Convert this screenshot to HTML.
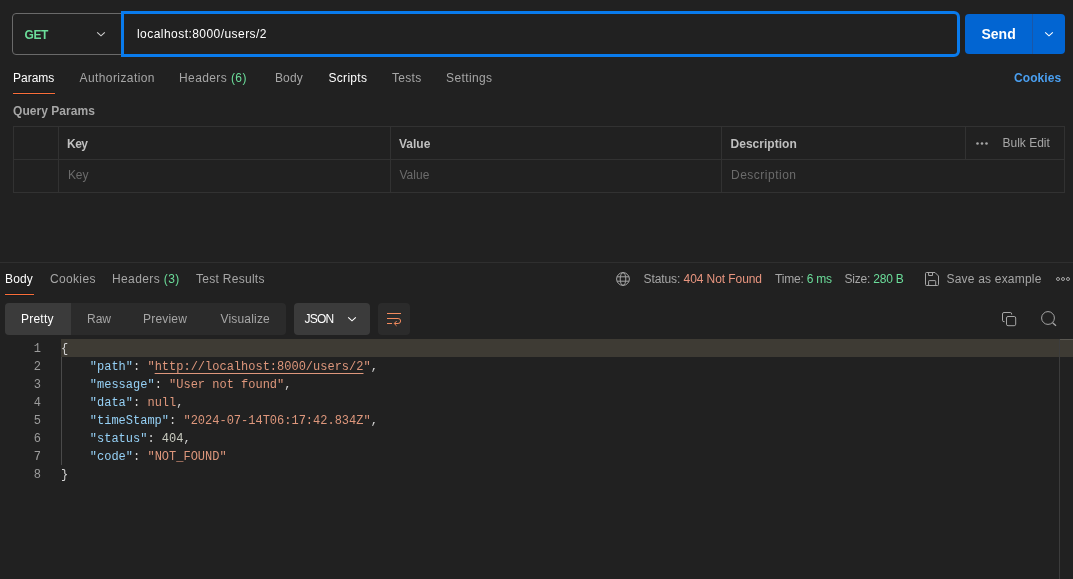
<!DOCTYPE html>
<html lang="en">
<head>
<meta charset="utf-8">
<title>Postman</title>
<style>
*{box-sizing:border-box;margin:0;padding:0}
html,body{width:1073px;height:579px;overflow:hidden;background:#212121}
body{position:relative;font-family:"Liberation Sans",Arial,sans-serif;font-size:12px;color:#a6a6a6;-webkit-font-smoothing:antialiased}
.a{position:absolute;white-space:nowrap;line-height:16px;height:16px}
.b{font-weight:bold}
.w{color:#fff}
.g{color:#6bdd9a}
.ph{color:#6b6b6b}
.hd{color:#bfbfbf;font-weight:bold}
.ln{position:absolute;background:#323232}
svg{position:absolute;overflow:visible}
.code{position:absolute;left:0;top:340px;font-family:"Liberation Mono","DejaVu Sans Mono",monospace;font-size:12px;line-height:18px;color:#d4d4d4}
.code .row{position:absolute;left:0;height:18px;white-space:pre}
.code .no{position:absolute;left:0;width:41px;text-align:right;color:#9c9c9c}
.code .tx{position:absolute;left:61px}
.k{color:#95d0f5}.s{color:#de977c}.n{color:#c9cbc0}.u{text-decoration:underline;text-underline-offset:2.5px}
</style>
</head>
<body>
<div id="root" style="position:absolute;left:0;top:0;width:1073px;height:579px;will-change:transform;transform:translateZ(0)">

<!-- URL bar -->
<div class="a" style="left:12px;top:13px;width:112px;height:42px;border:1px solid #6a6a6a;border-radius:4px 0 0 4px"></div>
<div class="a b g" id="get" style="left:24.5px;top:26.5px;letter-spacing:-0.4px">GET</div>
<svg id="chev1" style="left:96px;top:31px" width="10" height="6" viewBox="0 0 10 6"><path d="M1.2 1.3 L5 4.8 L8.8 1.3" fill="none" stroke="#cfcfcf" stroke-width="1.15"/></svg>
<div class="a" style="left:121px;top:11px;width:839px;height:46px;border:3px solid #097bed;border-radius:0 6px 6px 0;background:#212121"></div>
<div class="a w" id="url" style="left:137px;top:26px;letter-spacing:0.45px">localhost:8000/users/2</div>

<div class="a" style="left:965px;top:14px;width:100px;height:40px;background:#0265d2;border-radius:4px"></div>
<div class="ln" style="left:1032px;top:14px;width:1px;height:40px;background:#1a57a8"></div>
<div class="a b w" id="send" style="left:981.5px;top:26px;font-size:14px">Send</div>
<svg id="chev2" style="left:1044px;top:31px" width="10" height="6" viewBox="0 0 10 6"><path d="M1.2 1.3 L5 4.8 L8.8 1.3" fill="none" stroke="#fff" stroke-width="1.15"/></svg>

<!-- request tabs -->
<div class="a w" id="t1" style="left:13px;top:70px">Params</div>
<div class="ln" style="left:13px;top:92px;width:42px;height:3px;background:linear-gradient(#161d20 0 1px,#fb6d38 1px 2px,#161d20 2px 3px)"></div>
<div class="a" id="t2" style="left:79.5px;top:70px;letter-spacing:0.41px">Authorization</div>
<div class="a" id="t3" style="left:179px;top:70px;letter-spacing:0.4px">Headers <span class="g">(6)</span></div>
<div class="a" id="t4" style="left:275px;top:70px;letter-spacing:0.1px">Body</div>
<div class="a w" id="t5" style="left:328.5px;top:70px;letter-spacing:0.3px">Scripts</div>
<div class="a" id="t6" style="left:392px;top:70px;letter-spacing:0.28px">Tests</div>
<div class="a" id="t7" style="left:446px;top:70px;letter-spacing:0.39px">Settings</div>
<div class="a b" id="cook" style="left:1014px;top:69.5px;color:#4a9ff0;letter-spacing:0.07px">Cookies</div>

<div class="a b" id="qp" style="left:13px;top:103px;letter-spacing:0.05px">Query Params</div>

<!-- table -->
<div class="a" style="left:13px;top:126px;width:1052px;height:67px;border:1px solid #323232"></div>
<div class="ln" style="left:13px;top:159px;width:1052px;height:1px"></div>
<div class="ln" style="left:58px;top:126px;width:1px;height:67px"></div>
<div class="ln" style="left:390px;top:126px;width:1px;height:67px"></div>
<div class="ln" style="left:721px;top:126px;width:1px;height:67px"></div>
<div class="ln" style="left:965px;top:126px;width:1px;height:34px"></div>
<div class="a hd" id="h1" style="left:67px;top:136px;letter-spacing:-0.5px">Key</div>
<div class="a hd" id="h2" style="left:399px;top:136px">Value</div>
<div class="a hd" id="h3" style="left:730.5px;top:136px;letter-spacing:0.03px">Description</div>
<svg id="dots1" style="left:976px;top:141.5px" width="12" height="3" viewBox="0 0 12 3"><circle cx="1.5" cy="1.5" r="1.3" fill="#a6a6a6"/><circle cx="6" cy="1.5" r="1.3" fill="#a6a6a6"/><circle cx="10.5" cy="1.5" r="1.3" fill="#a6a6a6"/></svg>
<div class="a" id="bulk" style="left:1002.5px;top:135px">Bulk Edit</div>
<div class="a ph" id="p1" style="left:68px;top:167px;letter-spacing:-0.15px">Key</div>
<div class="a ph" id="p2" style="left:399.5px;top:167px">Value</div>
<div class="a ph" id="p3" style="left:731px;top:167px;letter-spacing:0.5px">Description</div>

<!-- response -->
<div class="ln" style="left:0;top:262px;width:1073px;height:1px;background:#2f2f2f"></div>
<div class="a w" id="r1" style="left:5px;top:271px;letter-spacing:0.15px">Body</div>
<div class="ln" style="left:5px;top:293px;width:29px;height:3px;background:linear-gradient(#161d20 0 1px,#fb6d38 1px 2px,#161d20 2px 3px)"></div>
<div class="a" id="r2" style="left:50px;top:271px;letter-spacing:0.34px">Cookies</div>
<div class="a" id="r3" style="left:112px;top:271px;letter-spacing:0.39px">Headers <span class="g">(3)</span></div>
<div class="a" id="r4" style="left:196px;top:271px;letter-spacing:0.28px">Test Results</div>

<svg id="globe" style="left:616px;top:272px" width="14" height="14" viewBox="0 0 14 14" fill="none" stroke="#a6a6a6" stroke-width="1"><circle cx="7" cy="7" r="6.4"/><ellipse cx="7" cy="7" rx="2.8" ry="6.4"/><path d="M1 4.8H13M1 9.2H13"/></svg>
<div class="a" id="s1" style="left:643.5px;top:271px;letter-spacing:-0.08px">Status: <span style="color:#e8957f">404 Not Found</span></div>
<div class="a" id="s2" style="left:775px;top:271px;letter-spacing:-0.2px">Time: <span class="g">6 ms</span></div>
<div class="a" id="s3" style="left:844.5px;top:271px;letter-spacing:-0.2px">Size: <span class="g">280 B</span></div>
<svg id="save" style="left:925px;top:272px" width="14" height="14" viewBox="0 0 14 14" fill="none" stroke="#a6a6a6" stroke-width="1" stroke-linejoin="round"><path d="M1.5 0.500H10L13.500 4V12.500a1 1 0 0 1-1 1H1.500a1 1 0 0 1-1-1V1.500a1 1 0 0 1 1-1Z"/><path d="M3.600 0.500V3.500H7.500V0.500"/><path d="M3.600 13.500V9.200a0.600 0.600 0 0 1 0.600-0.600H10.100a0.600 0.600 0 0 1 0.600 0.600V13.500"/></svg>
<div class="a" id="s4" style="left:946.5px;top:271px;letter-spacing:0.2px">Save as example</div>
<svg id="dots2" style="left:1056px;top:277px" width="14" height="4" viewBox="0 0 14 4" fill="none" stroke="#a6a6a6" stroke-width="1"><circle cx="2" cy="2" r="1.500"/><circle cx="7" cy="2" r="1.500"/><circle cx="12" cy="2" r="1.500"/></svg>

<!-- view mode row -->
<div class="a" style="left:5px;top:303px;width:281px;height:32px;background:#2b2b2b;border-radius:4px"></div>
<div class="a" style="left:5px;top:303px;width:66px;height:32px;background:#3b3b3b;border-radius:4px 0 0 4px"></div>
<div class="a w" id="m1" style="left:21px;top:311px;letter-spacing:0.23px">Pretty</div>
<div class="a" id="m2" style="left:87px;top:311px">Raw</div>
<div class="a" id="m3" style="left:143px;top:311px;letter-spacing:0.2px">Preview</div>
<div class="a" id="m4" style="left:220.5px;top:311px;letter-spacing:0.18px">Visualize</div>
<div class="a" style="left:294px;top:303px;width:76px;height:32px;background:#3b3b3b;border-radius:4px"></div>
<div class="a w" id="json" style="left:304.5px;top:311px;letter-spacing:-0.8px">JSON</div>
<svg id="chev3" style="left:347px;top:316px" width="10" height="6" viewBox="0 0 10 6"><path d="M1.2 1.3 L5 4.8 L8.8 1.3" fill="none" stroke="#fff" stroke-width="1.15"/></svg>
<div class="a" style="left:378px;top:303px;width:32px;height:32px;background:#2b2b2b;border-radius:4px"></div>
<svg id="wrap" style="left:386px;top:312px" width="16" height="15" viewBox="0 0 16 15" fill="none" stroke="#f48b5e" stroke-width="1"><path d="M1 1.500H15"/><path d="M1 6.500H12.100a2.500 2.500 0 0 1 0 5H8.600"/><path d="M10.600 9.100L8.200 11.500L10.600 13.900"/><path d="M1 11.500H6"/></svg>

<svg id="copy" style="left:1002px;top:312px" width="15" height="15" viewBox="0 0 15 15" fill="none" stroke="#a6a6a6" stroke-width="1"><rect x="4.500" y="4.500" width="9.200" height="9.200" rx="1.500"/><path d="M2.600 9.700H2a1.500 1.500 0 0 1-1.500-1.500V2A1.500 1.500 0 0 1 2 0.500H8.200A1.500 1.500 0 0 1 9.700 2V2.600"/></svg>
<svg id="search" style="left:1041px;top:311px" width="16" height="16" viewBox="0 0 16 16" fill="none" stroke="#a6a6a6" stroke-width="1"><circle cx="7" cy="7" r="6.400"/><path d="M11.600 11.700L15 14.800" stroke-width="1.300"/></svg>

<!-- editor -->
<div class="a" style="left:61px;top:339px;width:1012px;height:18px;background:#3e3b34"></div>
<div class="ln" style="left:61px;top:357px;width:1px;height:108px;background:#4a4a4a"></div>
<div class="ln" style="left:1059px;top:339px;width:1px;height:240px;background:#3c3c3c"></div>
<div class="ln" style="left:1060px;top:339px;width:13px;height:1px;background:#5a5852"></div>
<div class="code">
<div class="row" style="top:0"><span class="no">1</span><span class="tx">{</span></div>
<div class="row" style="top:18px"><span class="no">2</span><span class="tx">    <span class="k">"path"</span>: <span class="s">"<span class="u">http://localhost:8000/users/2</span>"</span>,</span></div>
<div class="row" style="top:36px"><span class="no">3</span><span class="tx">    <span class="k">"message"</span>: <span class="s">"User not found"</span>,</span></div>
<div class="row" style="top:54px"><span class="no">4</span><span class="tx">    <span class="k">"data"</span>: <span class="s">null</span>,</span></div>
<div class="row" style="top:72px"><span class="no">5</span><span class="tx">    <span class="k">"timeStamp"</span>: <span class="s">"2024-07-14T06:17:42.834Z"</span>,</span></div>
<div class="row" style="top:90px"><span class="no">6</span><span class="tx">    <span class="k">"status"</span>: <span class="n">404</span>,</span></div>
<div class="row" style="top:108px"><span class="no">7</span><span class="tx">    <span class="k">"code"</span>: <span class="s">"NOT_FOUND"</span></span></div>
<div class="row" style="top:126px"><span class="no">8</span><span class="tx">}</span></div>
</div>
</div>
</body>
</html>
